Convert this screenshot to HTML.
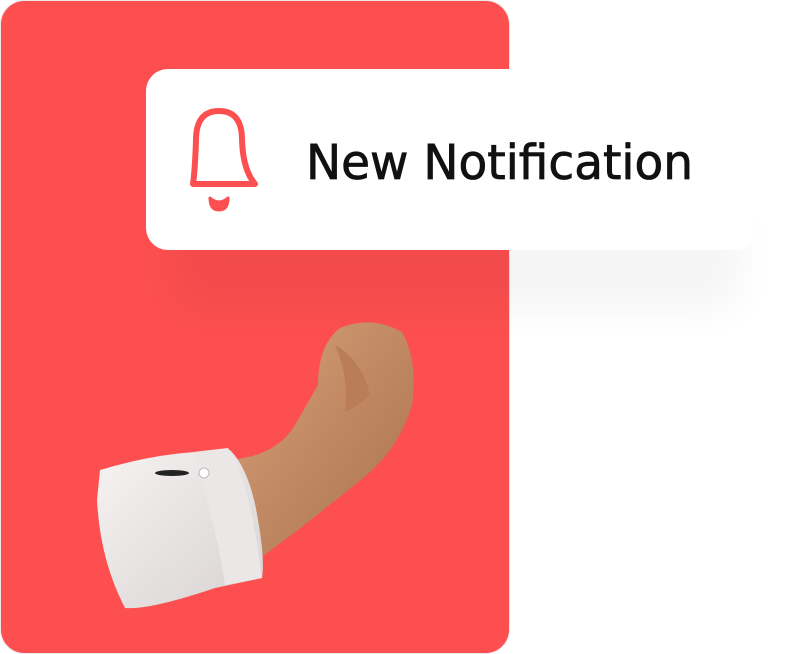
<!DOCTYPE html>
<html><head><meta charset="utf-8"><style>
html,body{margin:0;padding:0;background:#fff;width:800px;height:654px;overflow:hidden}
</style></head><body>
<svg width="800" height="654" viewBox="0 0 800 654" xmlns="http://www.w3.org/2000/svg">
<defs>
<filter id="sh" x="-20%" y="-30%" width="140%" height="180%"><feGaussianBlur stdDeviation="20"/></filter>
<linearGradient id="skin" x1="0" y1="0" x2="1" y2="1"><stop offset="0" stop-color="#d9a27a"/><stop offset="1" stop-color="#a8704c"/></linearGradient>
<linearGradient id="cuff" x1="0" y1="0" x2="1" y2="1"><stop offset="0" stop-color="#f7f3f3"/><stop offset="1" stop-color="#d8d2d2"/></linearGradient>
</defs>
<rect x="0.5" y="0.5" width="509" height="653" rx="24" fill="#fd4f4f" stroke="#e8e8e8"/>
<rect x="170" y="210" width="570" height="100" rx="20" fill="#000" opacity="0.04" filter="url(#sh)"/>
<rect x="146" y="69" width="610" height="181" rx="22" fill="#fff"/>
<g fill="none" stroke="#fd4f4f" stroke-width="6" stroke-linecap="round" stroke-linejoin="round">
<path d="M193 184 H255 Q243 170 242 140 Q242 111 219 111 Q196 111 196 140 Q195 170 193 184 Z"/>
</g>
<path d="M210 198 Q219 206 228 198 Q228 210 219 210 Q210 210 210 198 Z" fill="#fd4f4f" stroke="#fd4f4f" stroke-width="3" stroke-linejoin="round"/>
<text x="306" y="179" font-family="DejaVu Sans, sans-serif" font-size="48" fill="#111" stroke="#111" stroke-width="0.8" textLength="387" lengthAdjust="spacingAndGlyphs">New Notification</text>
<!-- arm -->
<path d="M225 460 Q275 458 295 425 L318 385 Q318 345 340 328 Q372 315 402 332 Q418 360 412 405 Q398 452 358 482 Q300 530 250 565 Z" fill="url(#skin)"/>
<path d="M335 345 Q350 380 345 412 Q360 405 370 395 Q362 360 335 345 Z" fill="#b97e58"/>
<!-- cuff -->
<path d="M100 470 Q150 455 195 452 L230 450 Q250 470 258 520 Q265 560 262 578 L215 588 Q150 610 125 608 Q100 560 97 500 Z" fill="url(#cuff)"/>
<path d="M193 452 L228 448 Q250 480 262 578 L225 585 Q215 520 193 452 Z" fill="#ece7e7"/>
<ellipse cx="172" cy="473" rx="17" ry="3" fill="#222"/>
<circle cx="204" cy="473" r="5" fill="#fff" stroke="#bbb"/>
</svg>
</body></html>
